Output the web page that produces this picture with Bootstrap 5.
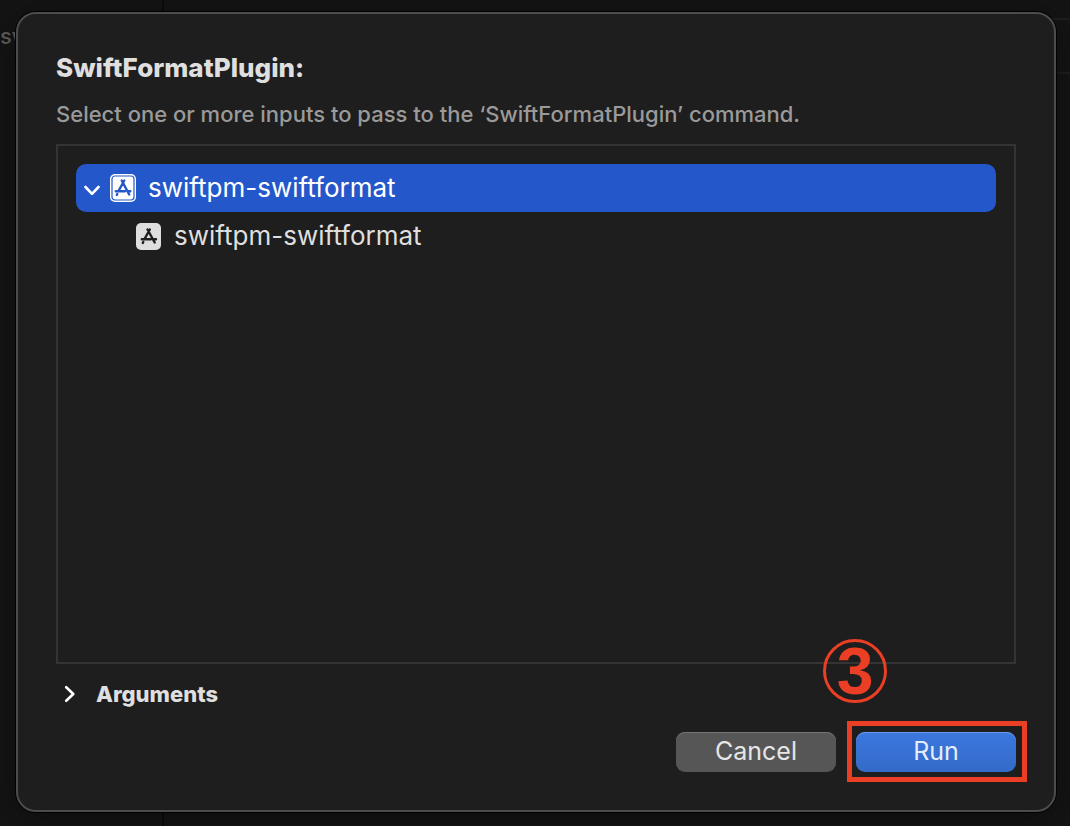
<!DOCTYPE html>
<html lang="en" data-bs-theme="dark">
<head>
<meta charset="utf-8">
<meta name="viewport" content="width=device-width, initial-scale=1">
<title>SwiftFormatPlugin</title>
<link href="https://cdn.jsdelivr.net/npm/bootstrap@5.3.0/dist/css/bootstrap.min.css" rel="stylesheet">
<style>
  body { font-family: Inter, "Liberation Sans", sans-serif; background: #141414; color: #dfdfdf; }
  .stage { padding: 12px 14px 14px 16px; isolation: isolate; }
  .editor { z-index: -1; }
  .editor-side { width: 164px; border-right: 2px solid #0b0b0b; padding-top: 22px; font-size: 22px; line-height: 28px; font-weight: 500; color: #5c5c5c; }
  .editor-bar { height: 56px; margin-top: 18px; border: solid #1e1e1e; border-width: 2px 0; }
  .sheet { background: #1e1e1e; border: 2px solid #4c4c4c; border-radius: 20px; padding: 38px; box-shadow: 0 0 0 1px #000, 0 8px 40px rgba(0, 0, 0, .35); }
  .sheet-title { font-size: 26px; line-height: 32px; font-weight: 800; color: #dfdfdf; }
  .sheet-note { font-size: 22px; line-height: 28px; font-weight: 500; color: #9a9a9a; }
  .tree { border: 2px solid #343434; padding: 18px; font-size: 26px; line-height: 32px; }
  .tree-row { height: 48px; border-radius: 10px; color: inherit; background: none; border: 0; text-align: left; }
  .tree-row.root { padding-left: 8px; }
  .tree-row.leaf { padding-left: 60px; }
  .tree-row.selected { background: #2458ca; color: #fff; }
  .arguments { background: none; border: 0; padding: 0 0 0 8px; gap: 20px; font-size: 22px; line-height: 28px; font-weight: 800; color: #dfdfdf; }
  .actions { gap: 20px; }
  .push { width: 160px; height: 40px; padding: 0 0 2px; border: 0; border-radius: 9px; font-size: 25px; line-height: 38px; color: #e6e6e6; background: #565656; box-shadow: inset 0 1px #757575; }
  .push:hover { background: #606060; color: #fff; }
  .push.primary, .push.primary:hover { color: #e3ecfb; background: linear-gradient(#3b78df, #336ac7); box-shadow: inset 0 1px #6a9bea; }
  .callout { inset: -11px -11px -10px -9px; border: 5px solid #eb3f25; pointer-events: none; }
  .step { left: -33px; bottom: 69px; width: 64px; height: 64px; border: 3px solid #eb3f25; border-radius: 50%; color: #eb3f25; font: 700 66px/58px "Liberation Sans", sans-serif; }
</style>
</head>
<body>
<div class="stage d-flex min-vh-100 position-relative overflow-hidden">
  <div class="editor position-absolute top-0 start-0 w-100 h-100 d-flex" aria-hidden="true">
    <div class="editor-side flex-shrink-0">sw</div>
    <div class="editor-bar flex-grow-1"></div>
  </div>

  <main class="sheet d-flex flex-column flex-grow-1">
    <h1 class="sheet-title mb-3">SwiftFormatPlugin:</h1>
    <p class="sheet-note mb-3">Select one or more inputs to pass to the ‘SwiftFormatPlugin’ command.</p>

    <div class="tree flex-grow-1 mb-3">
      <button type="button" class="tree-row root selected d-flex align-items-center w-100" aria-expanded="true">
        <svg width="16" height="12" viewBox="0 0 16 12" class="mt-1" fill="none" stroke="currentColor" stroke-width="2.6" stroke-linecap="round" stroke-linejoin="round" aria-hidden="true"><path d="M1.500 3 8 9.800l6.500-6.800"/></svg>
        <svg width="28" height="28" viewBox="0 0 28 28" class="ms-2 me-2 flex-shrink-0" aria-hidden="true">
          <rect x="2" y="0" width="26" height="28" rx="5" fill="#fff"/>
          <rect x="4" y="2" width="22" height="24" rx="3" fill="none" stroke="#2458ca" stroke-width="1.200"/>
          <g fill="none" stroke="#2458ca" stroke-width="2.400" stroke-linecap="round"><path d="M16.300 6.500 10.500 17M13.700 6.500l7.500 14M7.800 17.300H17M20.300 17.300h2M9.300 20l-.5.900"/></g>
        </svg>
        <span class="ms-1">swiftpm-swiftformat</span>
      </button>
      <button type="button" class="tree-row leaf d-flex align-items-center w-100">
        <svg width="26" height="28" viewBox="0 0 26 28" class="me-2 flex-shrink-0" aria-hidden="true">
          <rect x="0" y="1" width="25" height="27" rx="5" fill="#dedede"/>
          <g fill="none" stroke="#1e1e1e" stroke-width="2.400" stroke-linecap="round"><path d="M13.800 7.500 8.500 17M11.500 7.500l7.200 13M5.800 17.300h9M18 17.300h2M7.300 20l-.5.900"/></g>
        </svg>
        <span class="ms-1">swiftpm-swiftformat</span>
      </button>
    </div>

    <button type="button" class="arguments d-flex align-items-center align-self-start mb-4" aria-expanded="false">
      <svg width="12" height="18" viewBox="0 0 12 18" fill="none" stroke="#fff" stroke-width="2.600" stroke-linecap="round" stroke-linejoin="round" aria-hidden="true"><path d="M2.200 2.200 9.300 9l-7.100 6.800"/></svg>
      Arguments
    </button>

    <div class="actions d-flex justify-content-end">
      <button type="button" class="btn push">Cancel</button>
      <div class="position-relative">
        <button type="button" class="btn push primary">Run</button>
        <div class="callout position-absolute"></div>
        <div class="step position-absolute text-center">3</div>
      </div>
    </div>
  </main>
</div>
<script src="https://cdn.jsdelivr.net/npm/bootstrap@5.3.0/dist/js/bootstrap.bundle.min.js"></script>
</body>
</html>
